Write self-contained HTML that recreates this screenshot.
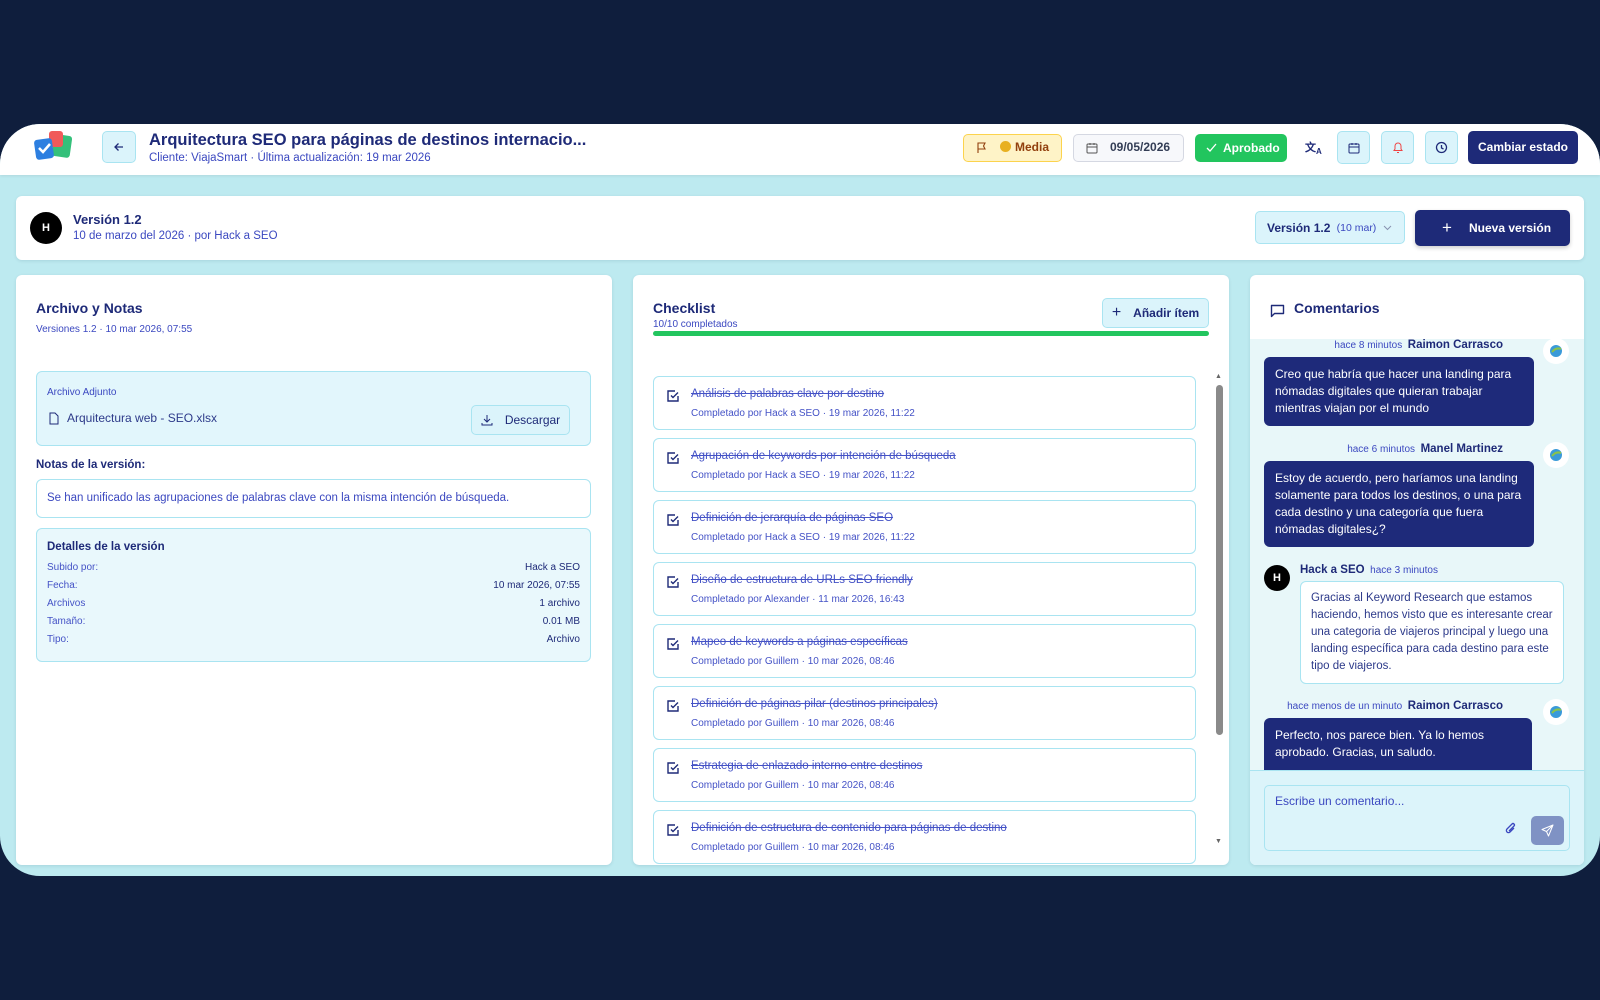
<!DOCTYPE html>
<html><head><meta charset="utf-8"><style>
*{box-sizing:border-box;margin:0;padding:0}
body{width:1600px;height:1000px;background:#0f1e3d;font-family:"Liberation Sans",sans-serif;position:relative;overflow:hidden;color:#1e2a78}
.app{position:absolute;left:0;top:124px;width:1600px;height:752px;border-radius:40px;background:#bdeaf0;overflow:hidden}
.hdr{position:absolute;left:0;top:0;width:1600px;height:51px;background:#fff;box-shadow:0 1px 3px rgba(0,0,0,.08)}
.abs{position:absolute}
.btnc{position:absolute;background:#dbf4fb;border:1px solid #a9e4f1;border-radius:5px;display:flex;align-items:center;justify-content:center}
.card{position:absolute;background:#fff;border-radius:6px;box-shadow:0 1px 3px rgba(0,60,80,.12)}
.b{font-weight:bold}
.item{position:absolute;left:653px;width:543px;height:54px;border:1px solid #a9e4f1;border-radius:6px;background:#fff}
.item svg{position:absolute;left:12px;top:12px}
.item .t{position:absolute;left:37px;top:11px;font-size:11.5px;color:#4452c6;text-decoration:line-through}
.item .s{position:absolute;left:37px;top:31px;font-size:10px;color:#4452c6}
.row{display:flex;justify-content:space-between;font-size:10px;color:#4452c6;height:18px}
.row span:last-child{color:#1e2a78}
.bub{position:absolute;background:#1e2a7a;color:#fff;font-size:12px;line-height:17px;padding:9px 11px;border-radius:6px}
.av{position:absolute;width:26px;height:26px;border-radius:50%;background:#fff;display:flex;align-items:center;justify-content:center}
.bl{position:absolute;width:26px;height:26px;border-radius:50%;background:#000;color:#fff;font-size:11px;font-weight:bold;text-align:center;line-height:26px}
</style></head><body>
<div class="app">
 <div class="hdr">
  <svg class="abs" style="left:33px;top:5px" width="42" height="32" viewBox="0 0 42 32"><rect x="20" y="6" width="18" height="22" rx="3" fill="#34c07a" transform="rotate(8 29 17)"/><rect x="16" y="2" width="14" height="16" rx="3" fill="#f05a5a"/><rect x="2" y="10" width="18" height="20" rx="3" fill="#2d7fe0" transform="rotate(-8 11 20)"/><path d="M6 19l4 4 7-8" stroke="#fff" stroke-width="2.5" fill="none"/></svg>
  <div class="btnc" style="left:102px;top:7px;width:34px;height:32px"><svg width="12" height="12" viewBox="0 0 12 12"><path d="M10 6H2M5.5 2.5L2 6l3.5 3.5" stroke="#1e2a78" stroke-width="1.3" fill="none"/></svg></div>
  <div class="abs b" style="left:149px;top:7px;font-size:16.5px">Arquitectura SEO para páginas de destinos internacio...</div>
  <div class="abs" style="left:149px;top:28px;font-size:11.5px;color:#3b48c0">Cliente: ViajaSmart · Última actualización: 19 mar 2026</div>
  <div class="abs" style="left:963px;top:10px;width:99px;height:28px;background:#fef3c7;border:1.5px solid #fcd34d;border-radius:5px;font-size:12px;font-weight:bold;color:#92400e;line-height:25px;padding-left:36px"><svg class="abs" style="left:12px;top:7px" width="12" height="12" viewBox="0 0 12 12"><path d="M2 11V1h7l-1.5 3L9 7H2" stroke="#92400e" stroke-width="1.1" fill="none"/></svg><span style="display:inline-block;width:11px;height:11px;border-radius:50%;background:#e8b020;vertical-align:-1px;margin-right:4px"></span>Media</div>
  <div class="abs" style="left:1073px;top:10px;width:111px;height:28px;background:#f7f8fb;border:1.5px solid #d5d8e2;border-radius:5px;font-size:12px;font-weight:bold;color:#333d55;line-height:25px;padding-left:36px"><svg class="abs" style="left:12px;top:7px" width="12" height="12" viewBox="0 0 12 12"><rect x="1" y="2" width="10" height="9" rx="1" stroke="#555" fill="none"/><path d="M1 5h10M4 1v2M8 1v2" stroke="#555"/></svg>09/05/2026</div>
  <div class="abs" style="left:1195px;top:10px;width:92px;height:28px;background:#22c55e;border-radius:5px;font-size:12px;font-weight:bold;color:#fff;line-height:28px;padding-left:28px"><svg class="abs" style="left:11px;top:9px" width="11" height="10" viewBox="0 0 11 10"><path d="M1 5l3 3 6-7" stroke="#fff" stroke-width="1.3" fill="none"/></svg>Aprobado</div>
  <div class="abs b" style="left:1305px;top:15px;font-size:11px">文<sub style="font-size:8px">A</sub></div>
  <div class="btnc" style="left:1337px;top:7px;width:33px;height:33px"><svg width="12" height="12" viewBox="0 0 12 12"><rect x="1" y="2" width="10" height="9" rx="1" stroke="#1e2a78" fill="none"/><path d="M1 5h10M4 1v2M8 1v2" stroke="#1e2a78"/></svg></div>
  <div class="btnc" style="left:1381px;top:7px;width:33px;height:33px"><svg width="12" height="13" viewBox="0 0 12 13"><path d="M2 9.5h8L9 8V5a3 3 0 00-6 0v3zM5 11.5h2" stroke="#ef4444" fill="none"/></svg></div>
  <div class="btnc" style="left:1425px;top:7px;width:33px;height:33px"><svg width="13" height="13" viewBox="0 0 13 13"><circle cx="6.5" cy="6.5" r="5" stroke="#1e2a78" stroke-width="1.3" fill="none"/><path d="M6.5 4v3l2 1" stroke="#1e2a78" stroke-width="1.3" fill="none"/></svg></div>
  <div class="abs b" style="left:1468px;top:7px;width:110px;height:33px;background:#1e2a78;border-radius:5px;color:#fff;font-size:12px;line-height:33px;text-align:center">Cambiar estado</div>
 </div>
 <div class="card" style="left:16px;top:72px;width:1568px;height:64px">
  <div class="bl" style="left:14px;top:16px;width:32px;height:32px;line-height:32px">H</div>
  <div class="abs b" style="left:57px;top:16px;font-size:13px">Versión 1.2</div>
  <div class="abs" style="left:57px;top:34px;font-size:11.5px;color:#3b48c0">10 de marzo del 2026 · por Hack a SEO</div>
  <div class="btnc" style="left:1239px;top:15px;width:150px;height:33px;justify-content:flex-start;padding-left:11px;font-size:12px"><b>Versión 1.2</b>&nbsp;<span style="font-size:10.5px;color:#3b48c0">&nbsp;(10 mar)</span><svg class="abs" style="right:12px;top:13px" width="9" height="6" viewBox="0 0 9 6"><path d="M1 1l3.5 3.5L8 1" stroke="#8892b0" fill="none"/></svg></div>
  <div class="abs b" style="left:1399px;top:14px;width:155px;height:36px;background:#1e2a78;border-radius:5px;color:#fff;font-size:12px;line-height:36px;padding-left:54px;box-shadow:0 2px 4px rgba(0,0,0,.2)"><span class="abs" style="left:27px;top:0;font-size:17px;font-weight:normal">+</span>Nueva versión</div>
 </div>
 <!-- left -->
 <div class="card" style="left:16px;top:151px;width:596px;height:590px">
  <div class="abs b" style="left:20px;top:25px;font-size:14px">Archivo y Notas</div>
  <div class="abs" style="left:20px;top:49px;font-size:10px;color:#3b48c0">Versiones 1.2 · 10 mar 2026, 07:55</div>
  <div class="abs" style="left:20px;top:96px;width:555px;height:75px;background:#e2f6fc;border:1px solid #a9e4f1;border-radius:6px">
   <div class="abs" style="left:10px;top:15px;font-size:10px;color:#3b48c0">Archivo Adjunto</div>
   <svg class="abs" style="left:12px;top:40px" width="10" height="13" viewBox="0 0 10 13"><path d="M1 1h5l3 3v8H1z" stroke="#1e2a78" fill="none"/></svg>
   <div class="abs" style="left:30px;top:39px;font-size:12px;color:#2d3a8a">Arquitectura web - SEO.xlsx</div>
   <div class="btnc" style="left:434px;top:33px;width:99px;height:30px;font-size:12px;color:#1e2a78"><svg width="12" height="12" viewBox="0 0 12 12" style="margin-right:12px"><path d="M6 1v7M3 5l3 3 3-3M1 9v2h10V9" stroke="#1e2a78" fill="none"/></svg>Descargar</div>
  </div>
  <div class="abs b" style="left:20px;top:184px;font-size:11.5px">Notas de la versión:</div>
  <div class="abs" style="left:20px;top:204px;width:555px;height:39px;border:1px solid #a9e4f1;border-radius:6px;font-size:11.5px;color:#3b48c0;padding:12px 10px">Se han unificado las agrupaciones de palabras clave con la misma intención de búsqueda.</div>
  <div class="abs" style="left:20px;top:253px;width:555px;height:134px;background:#e9f8fc;border:1px solid #a9e4f1;border-radius:6px;padding:12px 10px">
   <div class="b" style="font-size:11.5px;margin-bottom:9px">Detalles de la versión</div>
   <div class="row"><span>Subido por:</span><span>Hack a SEO</span></div>
   <div class="row"><span>Fecha:</span><span>10 mar 2026, 07:55</span></div>
   <div class="row"><span>Archivos</span><span>1 archivo</span></div>
   <div class="row"><span>Tamaño:</span><span>0.01 MB</span></div>
   <div class="row"><span>Tipo:</span><span>Archivo</span></div>
  </div>
 </div>
 <!-- middle -->
 <div class="card" style="left:633px;top:151px;width:596px;height:590px;overflow:hidden">
  <div class="abs b" style="left:20px;top:25px;font-size:14px">Checklist</div>
  <div class="abs" style="left:20px;top:44px;font-size:10px;color:#3b48c0">10/10 completados</div>
  <div class="btnc" style="left:469px;top:23px;width:107px;height:30px;font-size:12px;font-weight:bold"><span style="font-size:16px;font-weight:normal;margin-right:12px">+</span>Añadir ítem</div>
  <div class="abs" style="left:20px;top:56px;width:556px;height:5px;background:#22c55e;border-radius:3px"></div>
  <div class="abs" style="left:582px;top:98px;font-size:7px;color:#666">▲</div>
  <div class="abs" style="left:583px;top:110px;width:7px;height:350px;background:#8a8a8a;border-radius:4px"></div>
  <div class="abs" style="left:582px;top:563px;font-size:7px;color:#666">▼</div>
 </div>
 <!-- right -->
 <div class="card" style="left:1250px;top:151px;width:334px;height:590px;overflow:hidden">
  <svg class="abs" style="left:20px;top:29px" width="15" height="14" viewBox="0 0 15 14"><path d="M1.5 1.5h12v8h-9l-3 3z" stroke="#1e2a78" stroke-width="1.4" fill="none" stroke-linejoin="round"/></svg>
  <div class="abs b" style="left:44px;top:25px;font-size:14px">Comentarios</div>
  <div class="abs" style="left:0;top:64px;width:334px;height:431px;background:#e8f7f9">
   <div class="abs" style="right:81px;top:0px;font-size:10px;color:#3b48c0">hace 8 minutos&nbsp;&nbsp;<b style="font-size:11.5px;color:#1e2a78">Raimon Carrasco</b></div>
   <div class="av" style="left:293px;top:-1px"><svg width="14" height="14"><circle cx="7" cy="7" r="6" fill="#3a9ad9"/><path d="M3 8q4-5 9-3" stroke="#8bc34a" stroke-width="2" fill="none"/></svg></div>
   <div class="bub" style="left:14px;top:18px;width:270px">Creo que habría que hacer una landing para nómadas digitales que quieran trabajar mientras viajan por el mundo</div>
   <div class="abs" style="right:81px;top:104px;font-size:10px;color:#3b48c0">hace 6 minutos&nbsp;&nbsp;<b style="font-size:11.5px;color:#1e2a78">Manel Martinez</b></div>
   <div class="av" style="left:293px;top:103px"><svg width="14" height="14"><circle cx="7" cy="7" r="6" fill="#3a9ad9"/><path d="M3 8q4-5 9-3" stroke="#8bc34a" stroke-width="2" fill="none"/></svg></div>
   <div class="bub" style="left:14px;top:122px;width:270px">Estoy de acuerdo, pero haríamos una landing solamente para todos los destinos, o una para cada destino y una categoría que fuera nómadas digitales¿?</div>
   <div class="bl" style="left:14px;top:226px">H</div>
   <div class="abs" style="left:50px;top:225px;font-size:10px;color:#3b48c0"><b style="font-size:11.5px;color:#1e2a78">Hack a SEO</b>&nbsp;&nbsp;hace 3 minutos</div>
   <div class="abs" style="left:50px;top:242px;width:264px;background:#fff;border:1px solid #a9e4f1;border-radius:6px;font-size:11.5px;line-height:17px;color:#2d3a8a;padding:8px 10px">Gracias al Keyword Research que estamos haciendo, hemos visto que es interesante crear una categoria de viajeros principal y luego una landing específica para cada destino para este tipo de viajeros.</div>
   <div class="abs" style="right:81px;top:361px;font-size:10px;color:#3b48c0">hace menos de un minuto&nbsp;&nbsp;<b style="font-size:11.5px;color:#1e2a78">Raimon Carrasco</b></div>
   <div class="av" style="left:293px;top:360px"><svg width="14" height="14"><circle cx="7" cy="7" r="6" fill="#3a9ad9"/><path d="M3 8q4-5 9-3" stroke="#8bc34a" stroke-width="2" fill="none"/></svg></div>
   <div class="bub" style="left:14px;top:379px;width:268px;height:60px;border-radius:6px 6px 0 0">Perfecto, nos parece bien. Ya lo hemos aprobado. Gracias, un saludo.</div>
  </div>
  <div class="abs" style="left:0;top:495px;width:334px;height:95px;background:#dcf4fa;border-top:1px solid #a9e4f1">
   <div class="abs" style="left:14px;top:14px;width:306px;height:66px;background:#dcf4fa;border:1px solid #a9e4f1;border-radius:5px;font-size:12px;color:#3b48c0;padding:8px 10px">Escribe un comentario...
    <svg class="abs" style="left:240px;top:36px" width="12" height="14" viewBox="0 0 12 14"><path d="M9 6l-4 4a2 2 0 01-3-3l5-5a1.3 1.3 0 012 2l-5 5" stroke="#3b48c0" stroke-width="1.3" fill="none"/></svg>
    <div class="abs" style="left:266px;top:30px;width:33px;height:29px;background:#7f92c4;border-radius:5px;display:flex;align-items:center;justify-content:center"><svg width="13" height="13" viewBox="0 0 13 13"><path d="M12 1L1 5.5l4.5 2 2 4.5z M12 1L5.5 7.5" stroke="#fff" fill="none" stroke-linejoin="round"/></svg></div>
   </div>
  </div>
 </div>
</div>
<div style="position:absolute;left:0;top:0">
 <div class="item" style="top:376px"><svg width="14" height="14" viewBox="0 0 14 14"><path d="M12 7v5H2V2h7" stroke="#1e2a78" stroke-width="1.4" fill="none"/><path d="M5 6.5l2 2 5-5" stroke="#1e2a78" stroke-width="1.4" fill="none"/></svg><div class="t">Análisis de palabras clave por destino</div><div class="s">Completado por Hack a SEO · 19 mar 2026, 11:22</div></div>
 <div class="item" style="top:438px"><svg width="14" height="14" viewBox="0 0 14 14"><path d="M12 7v5H2V2h7" stroke="#1e2a78" stroke-width="1.4" fill="none"/><path d="M5 6.5l2 2 5-5" stroke="#1e2a78" stroke-width="1.4" fill="none"/></svg><div class="t">Agrupación de keywords por intención de búsqueda</div><div class="s">Completado por Hack a SEO · 19 mar 2026, 11:22</div></div>
 <div class="item" style="top:500px"><svg width="14" height="14" viewBox="0 0 14 14"><path d="M12 7v5H2V2h7" stroke="#1e2a78" stroke-width="1.4" fill="none"/><path d="M5 6.5l2 2 5-5" stroke="#1e2a78" stroke-width="1.4" fill="none"/></svg><div class="t">Definición de jerarquía de páginas SEO</div><div class="s">Completado por Hack a SEO · 19 mar 2026, 11:22</div></div>
 <div class="item" style="top:562px"><svg width="14" height="14" viewBox="0 0 14 14"><path d="M12 7v5H2V2h7" stroke="#1e2a78" stroke-width="1.4" fill="none"/><path d="M5 6.5l2 2 5-5" stroke="#1e2a78" stroke-width="1.4" fill="none"/></svg><div class="t">Diseño de estructura de URLs SEO friendly</div><div class="s">Completado por Alexander · 11 mar 2026, 16:43</div></div>
 <div class="item" style="top:624px"><svg width="14" height="14" viewBox="0 0 14 14"><path d="M12 7v5H2V2h7" stroke="#1e2a78" stroke-width="1.4" fill="none"/><path d="M5 6.5l2 2 5-5" stroke="#1e2a78" stroke-width="1.4" fill="none"/></svg><div class="t">Mapeo de keywords a páginas específicas</div><div class="s">Completado por Guillem · 10 mar 2026, 08:46</div></div>
 <div class="item" style="top:686px"><svg width="14" height="14" viewBox="0 0 14 14"><path d="M12 7v5H2V2h7" stroke="#1e2a78" stroke-width="1.4" fill="none"/><path d="M5 6.5l2 2 5-5" stroke="#1e2a78" stroke-width="1.4" fill="none"/></svg><div class="t">Definición de páginas pilar (destinos principales)</div><div class="s">Completado por Guillem · 10 mar 2026, 08:46</div></div>
 <div class="item" style="top:748px"><svg width="14" height="14" viewBox="0 0 14 14"><path d="M12 7v5H2V2h7" stroke="#1e2a78" stroke-width="1.4" fill="none"/><path d="M5 6.5l2 2 5-5" stroke="#1e2a78" stroke-width="1.4" fill="none"/></svg><div class="t">Estrategia de enlazado interno entre destinos</div><div class="s">Completado por Guillem · 10 mar 2026, 08:46</div></div>
 <div class="item" style="top:810px;height:54px"><svg width="14" height="14" viewBox="0 0 14 14"><path d="M12 7v5H2V2h7" stroke="#1e2a78" stroke-width="1.4" fill="none"/><path d="M5 6.5l2 2 5-5" stroke="#1e2a78" stroke-width="1.4" fill="none"/></svg><div class="t">Definición de estructura de contenido para páginas de destino</div><div class="s">Completado por Guillem · 10 mar 2026, 08:46</div></div>
</div>
</body></html>
